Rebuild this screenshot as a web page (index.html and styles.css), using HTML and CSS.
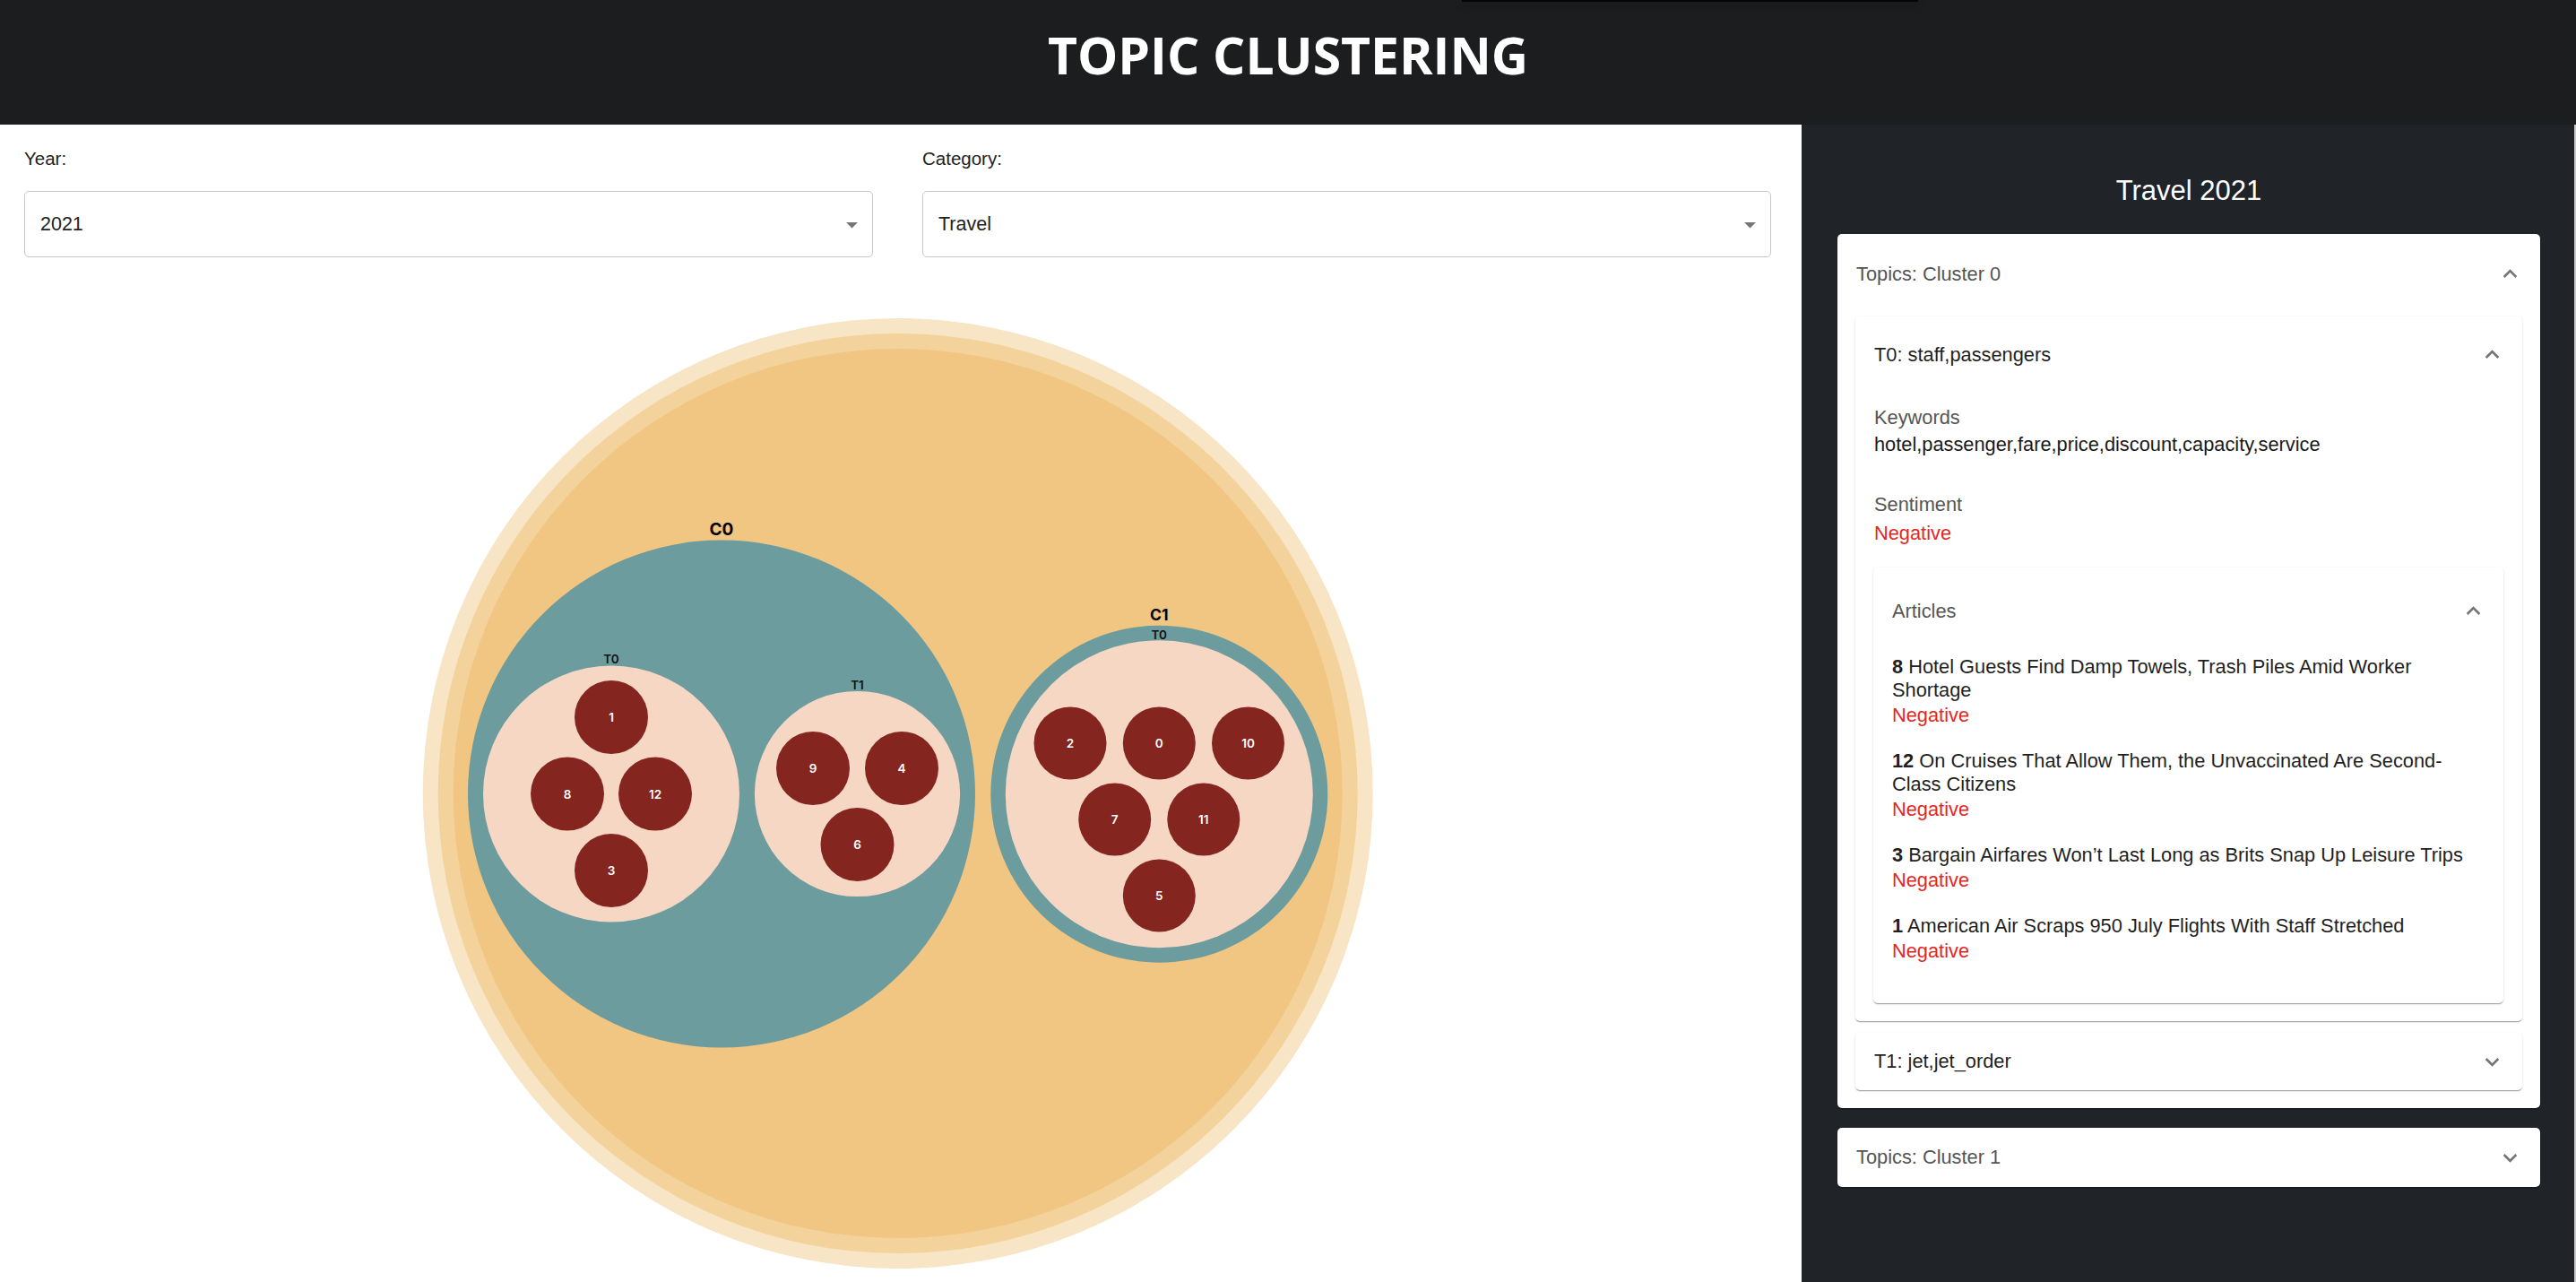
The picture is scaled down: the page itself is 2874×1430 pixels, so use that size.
FILE: index.html
```html
<!DOCTYPE html>
<html lang="en">
<head>
<meta charset="utf-8">
<title>Topic Clustering</title>
<link rel="stylesheet" href="styles.css">
</head>
<body>
<div class="app">
  <header class="topbar">
    <h1 class="title">TOPIC CLUSTERING</h1>
    <div class="top-shadow"></div>
  </header>
  <div class="main">
    <section class="left">
      <div class="controls">
        <div class="field">
          <label class="field-label">Year:</label>
          <div class="select">
            <span class="select-value">2021</span>
            <svg class="select-icon" viewBox="0 0 24 24"><path d="M7 10l5 5 5-5z"/></svg>
          </div>
        </div>
        <div class="field">
          <label class="field-label">Category:</label>
          <div class="select">
            <span class="select-value">Travel</span>
            <svg class="select-icon" viewBox="0 0 24 24"><path d="M7 10l5 5 5-5z"/></svg>
          </div>
        </div>
      </div>
      <div class="chart">
        <svg class="bubbles" width="2010" height="1130" viewBox="0 300 2010 1130">
          <circle cx="1001.7" cy="885" r="530" fill="#f7e5c6"/>
          <circle cx="1001.7" cy="885" r="513" fill="#f3d39b"/>
          <circle cx="1001.7" cy="885" r="496" fill="#f0c682"/>

          <circle cx="805" cy="885.5" r="283" fill="#6d9c9e"/>
          <text class="lbl-c" x="805" y="597" font-size="19">C0</text>

          <circle cx="682" cy="885.5" r="143" fill="#f6d7c4"/>
          <text class="lbl-t" x="682" y="740">T0</text>
          <g class="leaf">
            <circle cx="682" cy="800" r="41"/><text x="682" y="800">1</text>
            <circle cx="633" cy="885.5" r="41"/><text x="633" y="885.5">8</text>
            <circle cx="731" cy="885.5" r="41"/><text x="731" y="885.5">12</text>
            <circle cx="682" cy="971" r="41"/><text x="682" y="971">3</text>
          </g>

          <circle cx="956.5" cy="885.5" r="114.6" fill="#f6d7c4"/>
          <text class="lbl-t" x="956.5" y="769">T1</text>
          <g class="leaf">
            <circle cx="907" cy="857" r="41"/><text x="907" y="857">9</text>
            <circle cx="1006" cy="857" r="41"/><text x="1006" y="857">4</text>
            <circle cx="956.5" cy="942" r="41"/><text x="956.5" y="942">6</text>
          </g>

          <circle cx="1293.3" cy="885.7" r="188" fill="#6d9c9e"/>
          <text class="lbl-c" x="1293.3" y="691.5" font-size="17.5">C1</text>
          <circle cx="1293.3" cy="885.7" r="171.5" fill="#f6d7c4"/>
          <text class="lbl-t" x="1293.3" y="712.5">T0</text>
          <g class="leaf">
            <circle cx="1194" cy="829" r="40.5"/><text x="1194" y="829">2</text>
            <circle cx="1293.3" cy="829" r="40.5"/><text x="1293.3" y="829">0</text>
            <circle cx="1392.5" cy="829" r="40.5"/><text x="1392.5" y="829">10</text>
            <circle cx="1243.7" cy="914" r="40.5"/><text x="1243.7" y="914">7</text>
            <circle cx="1342.8" cy="914" r="40.5"/><text x="1342.8" y="914">11</text>
            <circle cx="1293.3" cy="999" r="40.5"/><text x="1293.3" y="999">5</text>
          </g>
        </svg>
      </div>
    </section>

    <aside class="panel">
      <h2 class="panel-title">Travel 2021</h2>

      <div class="card">
        <div class="summary summary-outer">
          <span class="summary-text muted">Topics: Cluster 0</span>
          <svg class="chev up" viewBox="0 0 24 24"><path d="M16.59 8.59 12 13.17 7.41 8.59 6 10l6 6 6-6z"/></svg>
        </div>
        <div class="details details-outer">
          <div class="card inner">
            <div class="summary summary-topic">
              <span class="summary-text">T0: staff,passengers</span>
              <svg class="chev up" viewBox="0 0 24 24"><path d="M16.59 8.59 12 13.17 7.41 8.59 6 10l6 6 6-6z"/></svg>
            </div>
            <div class="details details-topic">
              <div class="info">
                <div class="info-label">Keywords</div>
                <div class="info-value">hotel,passenger,fare,price,discount,capacity,service</div>
              </div>
              <div class="info info-sent">
                <div class="info-label">Sentiment</div>
                <div class="info-value neg">Negative</div>
              </div>

              <div class="card inner articles">
                <div class="summary summary-articles">
                  <span class="summary-text muted">Articles</span>
                  <svg class="chev up" viewBox="0 0 24 24"><path d="M16.59 8.59 12 13.17 7.41 8.59 6 10l6 6 6-6z"/></svg>
                </div>
                <div class="article-list">
                  <div class="article">
                    <div class="article-title"><b>8</b> Hotel Guests Find Damp Towels, Trash Piles Amid Worker Shortage</div>
                    <div class="article-sent neg">Negative</div>
                  </div>
                  <div class="article">
                    <div class="article-title"><b>12</b> On Cruises That Allow Them, the Unvaccinated Are Second-Class Citizens</div>
                    <div class="article-sent neg">Negative</div>
                  </div>
                  <div class="article">
                    <div class="article-title"><b>3</b> Bargain Airfares Won’t Last Long as Brits Snap Up Leisure Trips</div>
                    <div class="article-sent neg">Negative</div>
                  </div>
                  <div class="article">
                    <div class="article-title"><b>1</b> American Air Scraps 950 July Flights With Staff Stretched</div>
                    <div class="article-sent neg">Negative</div>
                  </div>
                </div>
              </div>
            </div>
          </div>

          <div class="card inner collapsed-topic">
            <div class="summary summary-collapsed">
              <span class="summary-text">T1: jet,jet_order</span>
              <svg class="chev" viewBox="0 0 24 24"><path d="M16.59 8.59 12 13.17 7.41 8.59 6 10l6 6 6-6z"/></svg>
            </div>
          </div>
        </div>
      </div>

      <div class="card cluster-collapsed">
        <div class="summary summary-cluster1">
          <span class="summary-text muted">Topics: Cluster 1</span>
          <svg class="chev" viewBox="0 0 24 24"><path d="M16.59 8.59 12 13.17 7.41 8.59 6 10l6 6 6-6z"/></svg>
        </div>
      </div>
    </aside>
  </div>
</div>
</body>
</html>
```

FILE: styles.css
```css
html, body {
  margin: 0;
  padding: 0;
}
body {
  width: 2874px;
  height: 1430px;
  overflow: hidden;
  font-family: "Liberation Sans", Arial, Helvetica, sans-serif;
  background: #ffffff;
}
.app {
  display: flex;
  flex-direction: column;
  height: 1430px;
}
.topbar {
  position: relative;
  height: 139px;
  flex: 0 0 139px;
  background: #1c1d1f;
  box-sizing: border-box;
  padding-top: 22px;
}
.title {
  margin: 0;
  text-align: center;
  color: #ffffff;
  font-family: "Open Sans", "Liberation Sans", sans-serif;
  font-weight: 700;
  font-size: 57px;
  line-height: 78px;
  letter-spacing: 0;
}
.top-shadow {
  position: absolute;
  left: 1631px;
  top: 0;
  width: 509px;
  height: 2px;
  background: #050505;
  box-shadow: 0 3px 10px rgba(0, 0, 0, 0.35);
}
.main {
  display: flex;
  flex: 1;
  min-height: 0;
}
.left {
  width: 2010px;
  flex: 0 0 2010px;
  background: #ffffff;
  display: flex;
  flex-direction: column;
}
.controls {
  display: grid;
  grid-template-columns: 947px 947px;
  column-gap: 55px;
  padding: 26px 33px 13px 27px;
}
.field-label {
  display: block;
  font-size: 20.5px;
  line-height: 23px;
  color: #222;
  margin-bottom: 25px;
}
.select {
  box-sizing: border-box;
  height: 74px;
  border: 1px solid #c8c8c8;
  border-radius: 5px;
  display: flex;
  align-items: center;
  padding-left: 17px;
  padding-right: 7px;
}
.select-value {
  flex: 1;
  font-size: 21.5px;
  color: #222;
}
.select-icon {
  width: 31px;
  height: 31px;
  fill: #757575;
}
.chart {
  flex: 1;
  overflow: hidden;
}
.bubbles {
  display: block;
}
.lbl-c {
  font-family: Inter, "Noto Sans", sans-serif;
  font-weight: 700;
  text-anchor: middle;
  fill: #000;
}
.lbl-t {
  font-family: Inter, "Noto Sans", sans-serif;
  font-weight: 600;
  font-size: 13.5px;
  text-anchor: middle;
  fill: #111;
}
.leaf circle {
  fill: #84261f;
}
.leaf text {
  font-family: Inter, "Noto Sans", sans-serif;
  font-weight: 600;
  font-size: 13.5px;
  fill: #ffffff;
  text-anchor: middle;
  dominant-baseline: central;
}

/* right panel */
.panel {
  width: 864px;
  flex: 0 0 864px;
  box-sizing: border-box;
  background: #202328;
  border-right: 2px solid #c9c9c9;
  padding: 56px 38px 0 40px;
}
.panel-title {
  margin: 0 0 30px;
  text-align: center;
  color: #ffffff;
  font-weight: 400;
  font-size: 31px;
  line-height: 36px;
}
.card {
  background: #ffffff;
  border-radius: 5px;
  box-shadow: 0 2px 1px -1px rgba(0,0,0,0.2), 0 1px 1px 0 rgba(0,0,0,0.14), 0 1px 3px 0 rgba(0,0,0,0.12);
}
.summary {
  display: flex;
  align-items: center;
  padding: 0 21px;
  box-sizing: border-box;
}
.summary-text {
  flex: 1;
  font-size: 21.8px;
  color: #1f1f1f;
}
.muted {
  color: #555555;
}
.chev {
  width: 31px;
  height: 31px;
  fill: #757575;
  margin-right: -3px;
}
.chev.up {
  transform: rotate(180deg);
}
.summary-outer {
  height: 89px;
}
.details-outer {
  padding: 3px 20px 20px;
}
.summary-topic {
  height: 85px;
}
.details-topic {
  padding: 13px 21px 20px 20px;
}
.info {
  padding-left: 1px;
}
.info-label {
  font-size: 21.8px;
  line-height: 30px;
  color: #555555;
}
.info-value {
  font-size: 21.8px;
  line-height: 30px;
  color: #1a1a1a;
}
.info-sent {
  margin-top: 37px;
}
.info-sent .info-value {
  margin-top: 2px;
}
.neg {
  color: #e2291f;
}
.articles {
  margin-top: 23px;
}
.summary-articles {
  height: 97px;
}
.article-list {
  padding: 1px 21px 45px;
}
.article + .article {
  margin-top: 25px;
}
.article-title {
  font-size: 21.8px;
  line-height: 26px;
  color: #1f1f1f;
}
.article-title b {
  font-weight: 700;
}
.article-sent {
  margin-top: 2px;
  font-size: 21.8px;
  line-height: 26px;
}
.collapsed-topic {
  margin-top: 13px;
}
.summary-collapsed {
  height: 64px;
}
.cluster-collapsed {
  margin-top: 22px;
}
.summary-cluster1 {
  height: 66px;
}
```
